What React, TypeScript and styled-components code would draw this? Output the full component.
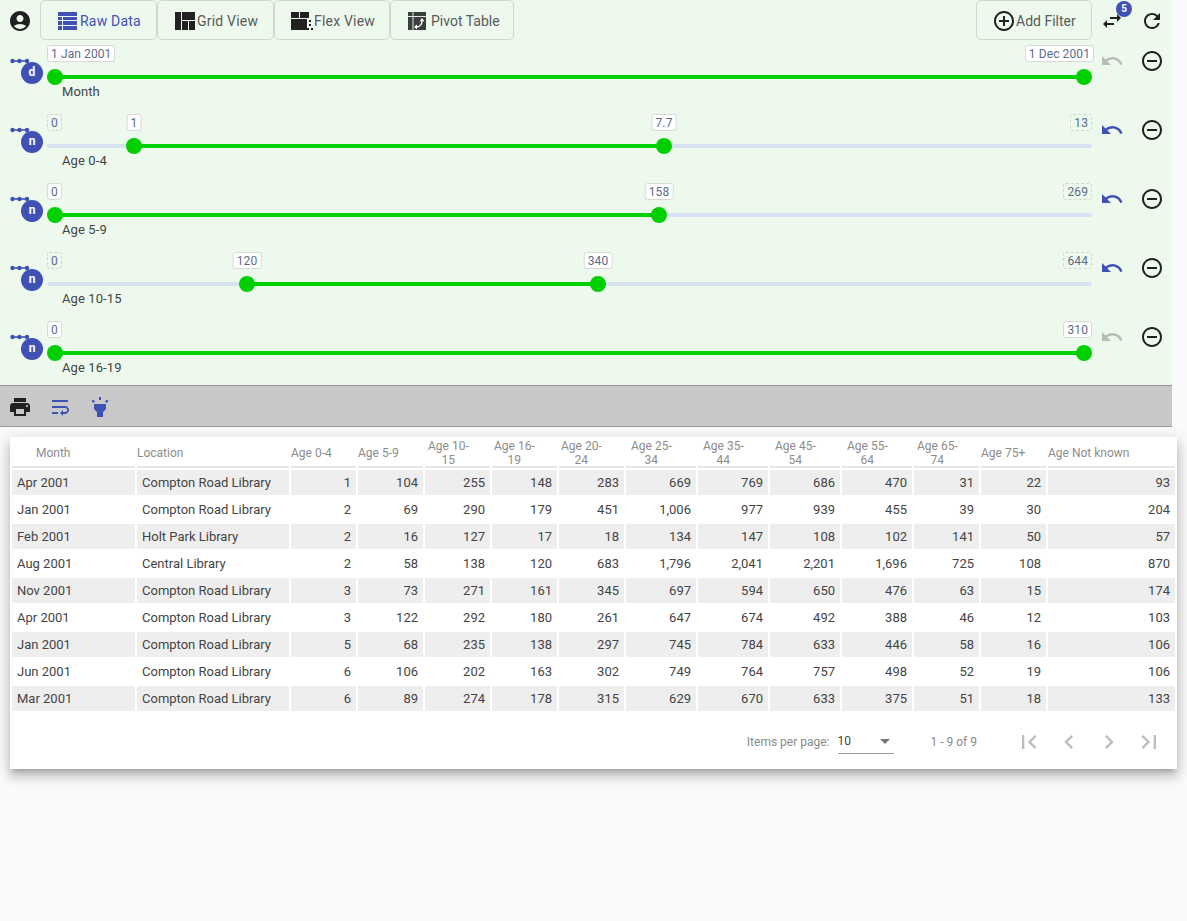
import React from 'react';
import styled, { createGlobalStyle } from 'styled-components';
import {
  MdAccountCircle,
  MdAddCircleOutline,
  MdChevronLeft,
  MdChevronRight,
  MdFirstPage,
  MdHighlight,
  MdLastPage,
  MdPrint,
  MdRefresh,
  MdRemoveCircleOutline,
  MdSwapHoriz,
  MdUndo,
  MdWrapText,
} from 'react-icons/md';

const GlobalStyle = createGlobalStyle`
  html, body {
    margin: 0;
    padding: 0;
    background: #fafafa;
    font-family: Roboto, "Liberation Sans", sans-serif;
  }
  #root {
    min-height: 921px;
  }
`;

const INDIGO = '#3f51b5';

const TopPanel = styled.div`
  width: 1172px;
  height: 385px;
  background: #edf9ed;
`;

const Toolbar = styled.div`
  display: flex;
  align-items: flex-start;
  height: 40px;
`;

const IconCell = styled.div<{ $color?: string }>`
  position: relative;
  box-sizing: border-box;
  flex: none;
  width: 40px;
  height: 40px;
  padding-top: 2px;
  display: flex;
  align-items: center;
  justify-content: center;
  color: ${p => p.$color || '#212121'};
`;

const ViewButton = styled.button<{ $active?: boolean; $width: number; $gap?: number; $pad: number; $spaced?: boolean }>`
  flex: none;
  width: ${p => p.$width}px;
  height: 40px;
  display: flex;
  align-items: center;
  gap: ${p => p.$gap ?? 2}px;
  padding: 2px 0 0 ${p => p.$pad}px;
  background: transparent;
  border: 1px solid #cfdacf;
  border-radius: 5px;
  font-family: inherit;
  font-size: 14px;
  letter-spacing: ${p => (p.$spaced ? '0.2px' : '0')};
  color: ${p => (p.$active ? INDIGO : '#5a5a5a')};
`;

const Spacer = styled.div`
  flex: 1;
`;

const CountBadge = styled.span`
  position: absolute;
  top: 1px;
  left: 24px;
  width: 16px;
  height: 16px;
  border-radius: 50%;
  background: ${INDIGO};
  color: #fff;
  font-size: 10px;
  font-weight: 700;
  line-height: 16px;
  text-align: center;
`;

const FilterRow = styled.div`
  display: grid;
  grid-template-columns: 47px 1045px 40px 40px;
  height: 69px;
`;

const TypeCell = styled.div`
  display: flex;
  flex-direction: column;
  padding: 17px 0 0 10px;
`;

const TypeBadge = styled.div`
  width: 22px;
  height: 22px;
  margin: -3px 0 0 11px;
  border-radius: 50%;
  background: ${INDIGO};
  color: #fff;
  font-size: 12px;
  font-weight: 700;
  line-height: 21px;
  text-align: center;
`;

const SliderCell = styled.div`
  position: relative;
`;

const Track = styled.div`
  position: absolute;
  top: 35px;
  left: 0;
  right: 0;
  height: 4px;
  border-radius: 2px;
  background: #d8e2f3;
`;

const TrackFill = styled.div`
  position: absolute;
  top: 35px;
  height: 4px;
  background: #00d000;
`;

const Thumb = styled.div`
  position: absolute;
  top: 29px;
  width: 16px;
  height: 16px;
  margin-left: -8px;
  border-radius: 50%;
  background: #00d000;
`;

const ValueLabel = styled.span<{ $dashed?: boolean }>`
  position: absolute;
  top: 5px;
  height: 15px;
  padding: 0 3px;
  border: 1px ${p => (p.$dashed ? 'dashed #d0d6d0' : 'solid #d8d8d8')};
  border-radius: 3px;
  background: ${p => (p.$dashed ? 'transparent' : '#fff')};
  color: #5c6b8a;
  font-size: 12px;
  letter-spacing: 0.1px;
  line-height: 17px;
  white-space: nowrap;
`;

const FieldName = styled.div`
  position: absolute;
  top: 44px;
  left: 15px;
  color: #444;
  font-size: 13px;
  letter-spacing: 0.1px;
  line-height: 16px;
`;

const ActionCell = styled.div<{ $color?: string }>`
  display: flex;
  justify-content: center;
  padding-top: 9px;
  color: ${p => p.$color || '#212121'};
`;

const ActionBar = styled.div`
  box-sizing: border-box;
  width: 1172px;
  height: 42px;
  display: flex;
  align-items: center;
  background: #c8c8c8;
  border-top: 1px solid #999;
  border-bottom: 1px solid #999;
`;

const TableCard = styled.div`
  width: 1167px;
  margin: 10px 0 0 10px;
  background: #fff;
  box-shadow: 0 5px 5px -3px rgba(0, 0, 0, 0.2), 0 8px 10px 1px rgba(0, 0, 0, 0.14),
    0 3px 14px 2px rgba(0, 0, 0, 0.12);
`;

const DataTable = styled.table`
  width: 1167px;
  table-layout: fixed;
  border-collapse: separate;
  border-spacing: 2px;
`;

const HeadCell = styled.th<{ $width: number; $indent: number }>`
  box-sizing: border-box;
  width: ${p => p.$width}px;
  height: 29px;
  padding: 0 0 0 ${p => p.$indent}px;
  border-bottom: 2px solid #e6e6e6;
  color: #8c8c8c;
  font-size: 12px;
  font-weight: 400;
  line-height: 13.5px;
  text-align: left;
  vertical-align: middle;
  white-space: nowrap;
`;

const HeadLabel = styled.span`
  display: inline-block;
  text-align: center;
  transform: translateY(1px);
`;

const BodyRow = styled.tr<{ $shaded: boolean }>`
  background: ${p => (p.$shaded ? '#eeeeee' : '#fff')};
`;

const BodyCell = styled.td<{ $align?: string }>`
  box-sizing: border-box;
  height: 25px;
  padding: 0 5px;
  background: inherit;
  color: #444;
  font-size: 13px;
  text-align: ${p => p.$align || 'right'};
  white-space: nowrap;
`;

const Paginator = styled.div`
  box-sizing: border-box;
  height: 56px;
  display: flex;
  align-items: center;
  justify-content: flex-end;
  padding: 1px 8px 0 0;
  color: #8a8a8a;
  font-size: 12px;
`;

const PerPage = styled.div`
  box-sizing: border-box;
  width: 56px;
  height: 24px;
  margin: 0 37px 0 8px;
  display: flex;
  align-items: center;
  justify-content: space-between;
  padding-right: 4px;
  border-bottom: 1px solid #9a9a9a;
  color: #444;
`;

const Caret = styled.span`
  width: 0;
  height: 0;
  border-left: 5px solid transparent;
  border-right: 5px solid transparent;
  border-top: 5px solid #757575;
`;

const PagerButtons = styled.div`
  display: flex;
  margin-left: 32px;
`;

const PagerButton = styled.div`
  width: 40px;
  height: 40px;
  display: flex;
  align-items: center;
  justify-content: center;
  color: #bdbdbd;
`;

// the four view icons are custom glyphs in the app, not from the material set
const TableIcon = () => (
  <svg width="19" height="18" viewBox="0 0 19 18" fill="currentColor">
    <rect width="19" height="4" />
    <rect y="5" width="4" height="3" />
    <rect x="5" y="5" width="14" height="3" />
    <rect y="9" width="4" height="4" />
    <rect x="5" y="9" width="14" height="4" />
    <rect y="14" width="4" height="4" />
    <rect x="5" y="14" width="14" height="4" />
  </svg>
);

const GridIcon = () => (
  <svg width="20" height="18" viewBox="0 0 20 18" fill="#222">
    <rect width="6" height="18" />
    <rect x="7" width="13" height="8" />
    <rect x="7" y="9" width="6" height="9" />
    <rect x="14" y="9" width="6" height="9" />
  </svg>
);

const FlexIcon = () => (
  <svg width="22" height="18" viewBox="0 0 22 18" fill="#222">
    <rect width="8" height="6" />
    <rect x="9" width="9" height="6" />
    <rect y="7" width="16" height="11" />
    <rect x="18" y="8" width="2" height="2" />
    <rect x="18" y="12" width="2" height="2" />
    <rect x="16" y="16" width="2" height="2" />
    <rect x="20" y="16" width="2" height="2" />
  </svg>
);

const PivotIcon = () => (
  <svg width="18" height="18" viewBox="0 0 18 18">
    <rect width="18" height="18" fill="#3a3f3c" />
    <path d="M0 4.5h18M5 0v18" stroke="#dfe8df" strokeWidth="1" fill="none" />
    <path d="M8 15c3 0 6-2 6-6" stroke="#fff" strokeWidth="1.5" fill="none" />
    <path d="M14 6l2.4 3.2h-4.8zM6 15l3-2.4v4.8z" fill="#fff" />
  </svg>
);

const LinkDots = () => (
  <svg width="20" height="8" viewBox="0 0 20 8" fill={INDIGO} style={{ display: 'block' }}>
    <rect x="2" y="3.2" width="17" height="1.6" />
    <circle cx="2.5" cy="4" r="2.2" />
    <circle cx="9.5" cy="4" r="2.2" />
    <circle cx="17" cy="4" r="2.2" />
  </svg>
);

interface Label {
  text: string;
  center?: number;
  left?: number;
  right?: number;
  dashed?: boolean;
}

interface Filter {
  type: string;
  name: string;
  from: number;
  to: number;
  labels: Label[];
  changed: boolean;
}

// x positions are measured from the start of the track
const filters: Filter[] = [
  {
    type: 'd',
    name: 'Month',
    from: 8,
    to: 1037,
    changed: false,
    labels: [
      { text: '1 Jan 2001', left: 0 },
      { text: '1 Dec 2001', right: -2 },
    ],
  },
  {
    type: 'n',
    name: 'Age 0-4',
    from: 87,
    to: 617,
    changed: true,
    labels: [
      { text: '0', left: 0, dashed: true },
      { text: '1', center: 87 },
      { text: '7.7', center: 617 },
      { text: '13', right: 0, dashed: true },
    ],
  },
  {
    type: 'n',
    name: 'Age 5-9',
    from: 8,
    to: 612,
    changed: true,
    labels: [
      { text: '0', left: 0 },
      { text: '158', center: 612 },
      { text: '269', right: 0, dashed: true },
    ],
  },
  {
    type: 'n',
    name: 'Age 10-15',
    from: 200,
    to: 551,
    changed: true,
    labels: [
      { text: '0', left: 0, dashed: true },
      { text: '120', center: 200 },
      { text: '340', center: 551 },
      { text: '644', right: 0, dashed: true },
    ],
  },
  {
    type: 'n',
    name: 'Age 16-19',
    from: 8,
    to: 1037,
    changed: false,
    labels: [
      { text: '0', left: 0 },
      { text: '310', right: 0 },
    ],
  },
];

const columns = [
  { title: ['Month'], width: 123, indent: 24 },
  { title: ['Location'], width: 152, indent: 0 },
  { title: ['Age 0-4'], width: 65, indent: 0 },
  { title: ['Age 5-9'], width: 65, indent: 0 },
  { title: ['Age 10-', '15'], width: 65, indent: 3 },
  { title: ['Age 16-', '19'], width: 65, indent: 2 },
  { title: ['Age 20-', '24'], width: 65, indent: 2 },
  { title: ['Age 25-', '34'], width: 70, indent: 5 },
  { title: ['Age 35-', '44'], width: 70, indent: 5 },
  { title: ['Age 45-', '54'], width: 70, indent: 5 },
  { title: ['Age 55-', '64'], width: 70, indent: 5 },
  { title: ['Age 65-', '74'], width: 65, indent: 3 },
  { title: ['Age 75+'], width: 65, indent: 0 },
  { title: ['Age Not known'], width: 127, indent: 0 },
];

const rows = [
  ['Apr 2001', 'Compton Road Library', '1', '104', '255', '148', '283', '669', '769', '686', '470', '31', '22', '93'],
  ['Jan 2001', 'Compton Road Library', '2', '69', '290', '179', '451', '1,006', '977', '939', '455', '39', '30', '204'],
  ['Feb 2001', 'Holt Park Library', '2', '16', '127', '17', '18', '134', '147', '108', '102', '141', '50', '57'],
  ['Aug 2001', 'Central Library', '2', '58', '138', '120', '683', '1,796', '2,041', '2,201', '1,696', '725', '108', '870'],
  ['Nov 2001', 'Compton Road Library', '3', '73', '271', '161', '345', '697', '594', '650', '476', '63', '15', '174'],
  ['Apr 2001', 'Compton Road Library', '3', '122', '292', '180', '261', '647', '674', '492', '388', '46', '12', '103'],
  ['Jan 2001', 'Compton Road Library', '5', '68', '235', '138', '297', '745', '784', '633', '446', '58', '16', '106'],
  ['Jun 2001', 'Compton Road Library', '6', '106', '202', '163', '302', '749', '764', '757', '498', '52', '19', '106'],
  ['Mar 2001', 'Compton Road Library', '6', '89', '274', '178', '315', '629', '670', '633', '375', '51', '18', '133'],
];

const labelStyle = (l: Label): React.CSSProperties => {
  if (l.center !== undefined) return { left: l.center, transform: 'translateX(-50%)' };
  if (l.left !== undefined) return { left: l.left };
  return { right: l.right };
};

const App: React.FC = () => (
  <>
    <GlobalStyle />
    <TopPanel>
      <Toolbar>
        <IconCell>
          <MdAccountCircle size={24} />
        </IconCell>
        <ViewButton $active $spaced $width={117} $pad={17} $gap={3}>
          <TableIcon />
          Raw Data
        </ViewButton>
        <ViewButton $spaced $width={117} $pad={17}>
          <GridIcon />
          Grid View
        </ViewButton>
        <ViewButton $spaced $width={116} $pad={16} $gap={1}>
          <FlexIcon />
          Flex View
        </ViewButton>
        <ViewButton $width={124} $pad={17} $gap={5}>
          <PivotIcon />
          Pivot Table
        </ViewButton>
        <Spacer />
        <ViewButton $width={116} $pad={15} $gap={0}>
          <MdAddCircleOutline size={24} color="#212121" />
          Add Filter
        </ViewButton>
        <IconCell>
          <MdSwapHoriz size={24} />
          <CountBadge>5</CountBadge>
        </IconCell>
        <IconCell>
          <MdRefresh size={24} />
        </IconCell>
      </Toolbar>

      {filters.map(f => (
        <FilterRow key={f.name}>
          <TypeCell>
            <LinkDots />
            <TypeBadge>{f.type}</TypeBadge>
          </TypeCell>
          <SliderCell>
            <Track />
            <TrackFill style={{ left: f.from, width: f.to - f.from }} />
            <Thumb style={{ left: f.from }} />
            <Thumb style={{ left: f.to }} />
            {f.labels.map(l => (
              <ValueLabel key={l.text} $dashed={l.dashed} style={labelStyle(l)}>
                {l.text}
              </ValueLabel>
            ))}
            <FieldName>{f.name}</FieldName>
          </SliderCell>
          <ActionCell $color={f.changed ? INDIGO : '#b5bdb5'}>
            <MdUndo size={24} />
          </ActionCell>
          <ActionCell>
            <MdRemoveCircleOutline size={24} />
          </ActionCell>
        </FilterRow>
      ))}
    </TopPanel>

    <ActionBar>
      <IconCell>
        <MdPrint size={24} />
      </IconCell>
      <IconCell $color={INDIGO}>
        <MdWrapText size={24} />
      </IconCell>
      <IconCell $color={INDIGO}>
        <MdHighlight size={24} />
      </IconCell>
    </ActionBar>

    <TableCard>
      <DataTable>
        <thead>
          <tr>
            {columns.map(c => (
              <HeadCell key={c.title.join(' ')} $width={c.width} $indent={c.indent}>
                <HeadLabel>
                  {c.title.map((line, i) => (
                    <React.Fragment key={line}>
                      {i > 0 && <br />}
                      {line}
                    </React.Fragment>
                  ))}
                </HeadLabel>
              </HeadCell>
            ))}
          </tr>
        </thead>
        <tbody>
          {rows.map((row, i) => (
            <BodyRow key={i} $shaded={i % 2 === 0}>
              {row.map((value, j) => (
                <BodyCell key={j} $align={j < 2 ? 'left' : 'right'}>
                  {value}
                </BodyCell>
              ))}
            </BodyRow>
          ))}
        </tbody>
      </DataTable>
      <Paginator>
        Items per page:
        <PerPage>
          10
          <Caret />
        </PerPage>
        1 - 9 of 9
        <PagerButtons>
          <PagerButton>
            <MdFirstPage size={28} />
          </PagerButton>
          <PagerButton>
            <MdChevronLeft size={28} />
          </PagerButton>
          <PagerButton>
            <MdChevronRight size={28} />
          </PagerButton>
          <PagerButton>
            <MdLastPage size={28} />
          </PagerButton>
        </PagerButtons>
      </Paginator>
    </TableCard>
  </>
);

export default App;
